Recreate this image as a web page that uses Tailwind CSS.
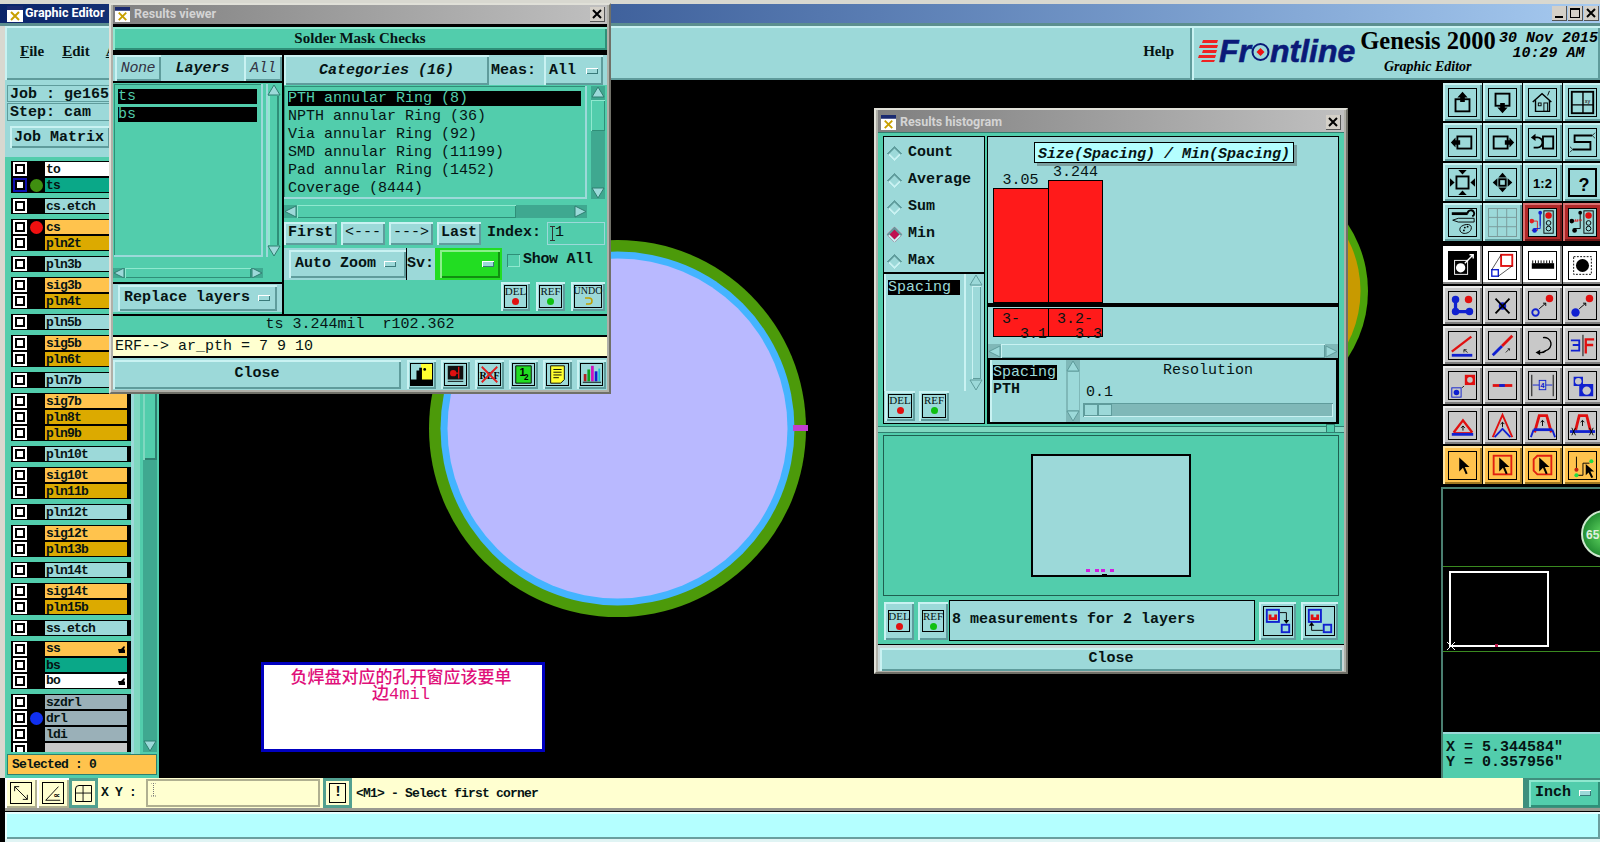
<!DOCTYPE html>
<html>
<head>
<meta charset="utf-8">
<script src="https://cdn.jsdelivr.net/npm/@tailwindcss/browser@4"></script>
</head>
<body class="bg-black">
<div class="relative w-[1600px] h-[842px] overflow-hidden bg-black flex flex-col font-['Liberation_Mono','Noto_Sans_CJK_SC',monospace] font-bold text-[#061414] text-[15px]">

<!-- main title bar -->
<div class="h-[4px] bg-[#d8d8d0] shrink-0"></div>
<div class="h-[19px] shrink-0 flex items-center bg-gradient-to-r from-[#0a246a] to-[#a6caf0] pl-[7px] pr-[1px]">
  <svg width="16" height="16" viewBox="0 0 16 16"><rect width="16" height="16" fill="#fff"/><rect width="16" height="4" fill="#1a2a70"/><path d="M4 6 L12 14 M12 6 L4 14" stroke="#c8a000" stroke-width="2"/></svg>
  <span class="ml-[2px] font-['Roboto',sans-serif] text-white text-[12.5px]">Graphic Editor</span>
  <div class="ml-auto flex gap-[1px]">
    <div class="w-[15px] h-[15px] bg-[#d4d0c8] border-r border-b border-[#555] flex items-end justify-center pb-[2px]"><div class="w-[8px] h-[2px] bg-black"></div></div>
    <div class="w-[15px] h-[15px] bg-[#d4d0c8] border-r border-b border-[#555] flex items-center justify-center"><div class="w-[10px] h-[10px] border border-black border-t-2"></div></div>
    <div class="w-[15px] h-[15px] bg-[#d4d0c8] border-r border-b border-[#555] flex items-center justify-center"><svg width="10" height="10" viewBox="0 0 10 10"><path d="M1 1L9 9M9 1L1 9" stroke="#000" stroke-width="2"/></svg></div>
  </div>
</div>
<div class="h-[3px] bg-[#5c8f8f] shrink-0"></div>

<!-- menu bar -->
<div class="h-[54px] shrink-0 flex bg-[#d8d8d0]">
  <div class="w-[5px]"></div>
  <div class="w-[1187px] h-full flex items-center pb-[4px] bg-[#9cd9d9] shadow-[inset_2px_2px_0_#c9f2f2,inset_-2px_-2px_0_#5f9c9c] font-['Liberation_Serif',serif] text-[15px]">
    <span class="ml-[15px]"><span class="underline">F</span>ile</span>
    <span class="ml-[18px]"><span class="underline">E</span>dit</span>
    <span class="ml-[16px]"><span class="underline">A</span>ction</span>
    <span class="ml-auto mr-[18px]">Help</span>
  </div>
  <div class="flex-1 relative flex items-center pb-[4px] bg-[#9cd9d9] shadow-[inset_2px_2px_0_#c9f2f2,inset_-2px_-2px_0_#5f9c9c]">
    <svg class="ml-[5px] shrink-0" width="22" height="24" viewBox="0 0 22 24"><path d="M6 1H21L20 4H5ZM3 6H21L20 9H2ZM6 11H20L19 14H5ZM2 16H19L18 19H1ZM5 21H18L17 23H4Z" fill="#ee2222"/></svg>
    <div class="flex items-center font-['Liberation_Sans',sans-serif] italic text-[32px] leading-[32px] text-[#0a1a78] [-webkit-text-stroke:0.6px_#0a1a78]">Fr<svg width="19" height="22" viewBox="0 0 19 22"><circle cx="9.5" cy="12" r="8" fill="none" stroke="#0a1a78" stroke-width="2"/><path d="M9.5 8L13.5 12L9.5 16L5.5 12Z" fill="#ee1111"/></svg>ntline</div>
    <div class="absolute left-[161px] top-[0px] w-[150px] text-center font-['Liberation_Serif',serif] text-[24.5px] leading-[30px] text-black">Genesis 2000</div>
    <div class="absolute left-[192px] top-[33px] font-['Liberation_Serif',serif] italic text-[14px] leading-[16px] text-black">Graphic Editor</div>
    <div class="absolute left-[305px] top-[5px] w-[103px] text-center italic text-[15px] leading-[15px] text-black whitespace-pre">30 Nov 2015<br>10:29 AM</div>
  </div>
</div>

<!-- middle -->
<div class="flex-1 min-h-0 flex">
  <!-- left panel -->
  <div class="w-[159px] shrink-0 flex bg-[#d8d8d0] pl-[5px]">
    <div class="flex-1 flex flex-col bg-[#3f9a88]">
      <div class="h-[77px] shrink-0 bg-[#9cd9d9] px-[2px] pt-[5px] flex flex-col text-[15px] leading-[17px]">
        <div class="h-[17px] border border-[#5f9c9c] pl-[2px] whitespace-nowrap overflow-hidden">Job : ge165</div>
        <div class="h-[18px] mt-[1px] border border-[#5f9c9c] pl-[2px]">Step: cam</div>
        <div class="mt-[5px] w-[100px] ml-[3px] h-[22px] flex items-center pl-[4px] bg-[#9cd9d9] shadow-[inset_2px_2px_0_#c9f2f2,inset_-2px_-2px_0_#5f9c9c]">Job Matrix</div>
      </div>
      <div class="flex-1 min-h-0 flex bg-[#52cdac]">
        <div class="w-[126px] h-[591px] mt-[4px] overflow-hidden pl-[6px] text-[13px] leading-[16px] tracking-[-0.8px] flex flex-col gap-[5px] bg-[#52cdac] shrink-0">
          <div class="bg-black">
            <div class="h-[16px] flex items-center"><div class="w-[14px] h-[14px] ml-[2px] border-2 border-white"><div class="w-full h-full border-2 border-black bg-white"></div></div><div class="w-[18px] flex justify-center"></div><div class="w-[82px] h-[14px] bg-white pl-[1px]">to</div></div>
            <div class="h-[16px] flex items-center"><div class="w-[14px] h-[14px] ml-[2px] border-2 border-[#1010b0]"><div class="w-full h-full border-2 border-black bg-white"></div></div><div class="w-[18px] flex justify-center"><div class="w-[13px] h-[13px] rounded-full bg-[#3f8f10]"></div></div><div class="w-[82px] h-[14px] bg-[#0aa888] pl-[1px]">ts</div></div>
          </div>
          <div class="bg-black"><div class="h-[16px] flex items-center"><div class="w-[14px] h-[14px] ml-[2px] border-2 border-white"><div class="w-full h-full border-2 border-black bg-white"></div></div><div class="w-[18px]"></div><div class="w-[82px] h-[14px] bg-[#9cd9d9] pl-[1px]">cs.etch</div></div></div>
          <div class="bg-black">
            <div class="h-[16px] flex items-center"><div class="w-[14px] h-[14px] ml-[2px] border-2 border-white"><div class="w-full h-full border-2 border-black bg-white"></div></div><div class="w-[18px] flex justify-center"><div class="w-[13px] h-[13px] rounded-full bg-[#f01010]"></div></div><div class="w-[82px] h-[14px] bg-[#ffc34d] pl-[1px]">cs</div></div>
            <div class="h-[16px] flex items-center"><div class="w-[14px] h-[14px] ml-[2px] border-2 border-white"><div class="w-full h-full border-2 border-black bg-white"></div></div><div class="w-[18px]"></div><div class="w-[82px] h-[14px] bg-[#dcaa00] pl-[1px]">pln2t</div></div>
          </div>
          <div class="bg-black"><div class="h-[16px] flex items-center"><div class="w-[14px] h-[14px] ml-[2px] border-2 border-white"><div class="w-full h-full border-2 border-black bg-white"></div></div><div class="w-[18px]"></div><div class="w-[82px] h-[14px] bg-[#9cd9d9] pl-[1px]">pln3b</div></div></div>
          <div class="bg-black">
            <div class="h-[16px] flex items-center"><div class="w-[14px] h-[14px] ml-[2px] border-2 border-white"><div class="w-full h-full border-2 border-black bg-white"></div></div><div class="w-[18px]"></div><div class="w-[82px] h-[14px] bg-[#ffc34d] pl-[1px]">sig3b</div></div>
            <div class="h-[16px] flex items-center"><div class="w-[14px] h-[14px] ml-[2px] border-2 border-white"><div class="w-full h-full border-2 border-black bg-white"></div></div><div class="w-[18px]"></div><div class="w-[82px] h-[14px] bg-[#dcaa00] pl-[1px]">pln4t</div></div>
          </div>
          <div class="bg-black"><div class="h-[16px] flex items-center"><div class="w-[14px] h-[14px] ml-[2px] border-2 border-white"><div class="w-full h-full border-2 border-black bg-white"></div></div><div class="w-[18px]"></div><div class="w-[82px] h-[14px] bg-[#9cd9d9] pl-[1px]">pln5b</div></div></div>
          <div class="bg-black">
            <div class="h-[16px] flex items-center"><div class="w-[14px] h-[14px] ml-[2px] border-2 border-white"><div class="w-full h-full border-2 border-black bg-white"></div></div><div class="w-[18px]"></div><div class="w-[82px] h-[14px] bg-[#ffc34d] pl-[1px]">sig5b</div></div>
            <div class="h-[16px] flex items-center"><div class="w-[14px] h-[14px] ml-[2px] border-2 border-white"><div class="w-full h-full border-2 border-black bg-white"></div></div><div class="w-[18px]"></div><div class="w-[82px] h-[14px] bg-[#dcaa00] pl-[1px]">pln6t</div></div>
          </div>
          <div class="bg-black"><div class="h-[16px] flex items-center"><div class="w-[14px] h-[14px] ml-[2px] border-2 border-white"><div class="w-full h-full border-2 border-black bg-white"></div></div><div class="w-[18px]"></div><div class="w-[82px] h-[14px] bg-[#9cd9d9] pl-[1px]">pln7b</div></div></div>
          <div class="bg-black">
            <div class="h-[16px] flex items-center"><div class="w-[14px] h-[14px] ml-[2px] border-2 border-white"><div class="w-full h-full border-2 border-black bg-white"></div></div><div class="w-[18px]"></div><div class="w-[82px] h-[14px] bg-[#ffc34d] pl-[1px]">sig7b</div></div>
            <div class="h-[16px] flex items-center"><div class="w-[14px] h-[14px] ml-[2px] border-2 border-white"><div class="w-full h-full border-2 border-black bg-white"></div></div><div class="w-[18px]"></div><div class="w-[82px] h-[14px] bg-[#dcaa00] pl-[1px]">pln8t</div></div>
            <div class="h-[16px] flex items-center"><div class="w-[14px] h-[14px] ml-[2px] border-2 border-white"><div class="w-full h-full border-2 border-black bg-white"></div></div><div class="w-[18px]"></div><div class="w-[82px] h-[14px] bg-[#dcaa00] pl-[1px]">pln9b</div></div>
          </div>
          <div class="bg-black"><div class="h-[16px] flex items-center"><div class="w-[14px] h-[14px] ml-[2px] border-2 border-white"><div class="w-full h-full border-2 border-black bg-white"></div></div><div class="w-[18px]"></div><div class="w-[82px] h-[14px] bg-[#9cd9d9] pl-[1px]">pln10t</div></div></div>
          <div class="bg-black">
            <div class="h-[16px] flex items-center"><div class="w-[14px] h-[14px] ml-[2px] border-2 border-white"><div class="w-full h-full border-2 border-black bg-white"></div></div><div class="w-[18px]"></div><div class="w-[82px] h-[14px] bg-[#ffc34d] pl-[1px]">sig10t</div></div>
            <div class="h-[16px] flex items-center"><div class="w-[14px] h-[14px] ml-[2px] border-2 border-white"><div class="w-full h-full border-2 border-black bg-white"></div></div><div class="w-[18px]"></div><div class="w-[82px] h-[14px] bg-[#dcaa00] pl-[1px]">pln11b</div></div>
          </div>
          <div class="bg-black"><div class="h-[16px] flex items-center"><div class="w-[14px] h-[14px] ml-[2px] border-2 border-white"><div class="w-full h-full border-2 border-black bg-white"></div></div><div class="w-[18px]"></div><div class="w-[82px] h-[14px] bg-[#9cd9d9] pl-[1px]">pln12t</div></div></div>
          <div class="bg-black">
            <div class="h-[16px] flex items-center"><div class="w-[14px] h-[14px] ml-[2px] border-2 border-white"><div class="w-full h-full border-2 border-black bg-white"></div></div><div class="w-[18px]"></div><div class="w-[82px] h-[14px] bg-[#ffc34d] pl-[1px]">sig12t</div></div>
            <div class="h-[16px] flex items-center"><div class="w-[14px] h-[14px] ml-[2px] border-2 border-white"><div class="w-full h-full border-2 border-black bg-white"></div></div><div class="w-[18px]"></div><div class="w-[82px] h-[14px] bg-[#dcaa00] pl-[1px]">pln13b</div></div>
          </div>
          <div class="bg-black"><div class="h-[16px] flex items-center"><div class="w-[14px] h-[14px] ml-[2px] border-2 border-white"><div class="w-full h-full border-2 border-black bg-white"></div></div><div class="w-[18px]"></div><div class="w-[82px] h-[14px] bg-[#9cd9d9] pl-[1px]">pln14t</div></div></div>
          <div class="bg-black">
            <div class="h-[16px] flex items-center"><div class="w-[14px] h-[14px] ml-[2px] border-2 border-white"><div class="w-full h-full border-2 border-black bg-white"></div></div><div class="w-[18px]"></div><div class="w-[82px] h-[14px] bg-[#ffc34d] pl-[1px]">sig14t</div></div>
            <div class="h-[16px] flex items-center"><div class="w-[14px] h-[14px] ml-[2px] border-2 border-white"><div class="w-full h-full border-2 border-black bg-white"></div></div><div class="w-[18px]"></div><div class="w-[82px] h-[14px] bg-[#dcaa00] pl-[1px]">pln15b</div></div>
          </div>
          <div class="bg-black"><div class="h-[16px] flex items-center"><div class="w-[14px] h-[14px] ml-[2px] border-2 border-white"><div class="w-full h-full border-2 border-black bg-white"></div></div><div class="w-[18px]"></div><div class="w-[82px] h-[14px] bg-[#9cd9d9] pl-[1px]">ss.etch</div></div></div>
          <div class="bg-black">
            <div class="h-[16px] flex items-center"><div class="w-[14px] h-[14px] ml-[2px] border-2 border-white"><div class="w-full h-full border-2 border-black bg-white"></div></div><div class="w-[18px]"></div><div class="w-[82px] h-[14px] bg-[#ffc34d] pl-[1px] flex justify-between items-center">ss<svg class="mr-[1px]" width="9" height="9" viewBox="0 0 9 9"><path d="M1 4L4 4L7 1L8 2L7 4L8 5V8H2Z"/></svg></div></div>
            <div class="h-[16px] flex items-center"><div class="w-[14px] h-[14px] ml-[2px] border-2 border-white"><div class="w-full h-full border-2 border-black bg-white"></div></div><div class="w-[18px]"></div><div class="w-[82px] h-[14px] bg-[#0aa888] pl-[1px]">bs</div></div>
            <div class="h-[16px] flex items-center"><div class="w-[14px] h-[14px] ml-[2px] border-2 border-white"><div class="w-full h-full border-2 border-black bg-white"></div></div><div class="w-[18px]"></div><div class="w-[82px] h-[14px] bg-white pl-[1px] flex justify-between items-center">bo<svg class="mr-[1px]" width="9" height="9" viewBox="0 0 9 9"><path d="M1 4L4 4L7 1L8 2L7 4L8 5V8H2Z"/></svg></div></div>
          </div>
          <div class="bg-black">
            <div class="h-[16px] flex items-center"><div class="w-[14px] h-[14px] ml-[2px] border-2 border-white"><div class="w-full h-full border-2 border-black bg-white"></div></div><div class="w-[18px]"></div><div class="w-[82px] h-[14px] bg-[#9ab0b8] pl-[1px]">szdrl</div></div>
            <div class="h-[16px] flex items-center"><div class="w-[14px] h-[14px] ml-[2px] border-2 border-white"><div class="w-full h-full border-2 border-black bg-white"></div></div><div class="w-[18px] flex justify-center"><div class="w-[13px] h-[13px] rounded-full bg-[#1030f0]"></div></div><div class="w-[82px] h-[14px] bg-[#9ab0b8] pl-[1px]">drl</div></div>
            <div class="h-[16px] flex items-center"><div class="w-[14px] h-[14px] ml-[2px] border-2 border-white"><div class="w-full h-full border-2 border-black bg-white"></div></div><div class="w-[18px]"></div><div class="w-[82px] h-[14px] bg-[#9ab0b8] pl-[1px]">ldi</div></div>
            <div class="h-[16px] flex items-center"><div class="w-[14px] h-[14px] ml-[2px] border-2 border-white"><div class="w-full h-full border-2 border-black bg-white"></div></div><div class="w-[18px]"></div><div class="w-[82px] h-[14px] bg-[#c8c8c8] pl-[1px]"></div></div>
          </div>
        </div>
        <!-- list scroll bar -->
        <div class="w-[3px] bg-[#9cd9d9]"></div>
        <div class="w-[6px] bg-[#7fd8c0]"></div>
        <div class="w-[14px] ml-[3px] mr-[1px] h-[591px] mt-[4px] bg-[#3fa890] flex flex-col justify-between">
          <div class="h-[299px] shadow-[inset_2px_0_0_#7fd8c0,inset_-2px_-2px_0_#2f7f70] bg-[#52cdac]"></div>
          <svg width="14" height="12" viewBox="0 0 14 12"><polygon points="1,1 13,1 7,11" fill="#9cd9d9" stroke="#2f7f70"/></svg>
        </div>
      </div>
      <div class="h-[24px] shrink-0 bg-[#52cdac] pl-[2px] pr-[2px] pb-[3px]">
        <div class="h-[21px] bg-[#ffc34d] border border-[#2f7f70] pl-[4px] text-[13px] leading-[19px] tracking-[-0.8px]">Selected : 0</div>
      </div>
    </div>
  </div>

  <!-- canvas -->
  <div class="flex-1 relative bg-black overflow-hidden">
    <svg class="absolute left-[-159px] top-[-80px]" width="1600" height="842" viewBox="0 0 1600 842">
      <circle cx="617.5" cy="428.5" r="188.5" fill="#4c9a0a"/>
      <circle cx="617.5" cy="428.5" r="177" fill="#44b4ff"/>
      <circle cx="617.5" cy="428.5" r="170" fill="#b9b9ff"/>
      <rect x="793" y="425" width="15" height="6" fill="#c040d0"/>
      <circle cx="1247.5" cy="291" r="120.5" fill="#4ca30a"/>
      <circle cx="1247.5" cy="291" r="113" fill="#c89a00"/>
    </svg>
    <div class="absolute left-[102px] top-[582px] w-[284px] h-[90px] bg-white border-[3px] border-[#0000c0] pt-[6px] text-center text-[#e0107a] text-[17px] leading-[16px] font-['Liberation_Mono','Noto_Sans_CJK_SC',monospace] font-medium">
      <div class="w-[230px] mx-auto ml-[22px]">负焊盘对应的孔开窗应该要单边4mil</div>
    </div>
  </div>

  <!-- right panel -->
  <div class="w-[159px] shrink-0 bg-black flex flex-col pl-[2px] pt-[3px] overflow-hidden">
    <div class="grid grid-cols-[repeat(4,39px)] gap-x-[1px] gap-y-[2px]">
      <div class="h-[38px] flex items-center justify-center bg-[#9cd9d9] shadow-[inset_2px_2px_0_#c9f2f2,inset_-2px_-2px_0_#5f9c9c]"><svg class="border border-black" width="29" height="29" viewBox="0 0 29 29"><rect x="7" y="11" width="15" height="13" fill="none" stroke="#000" stroke-width="2"/><polygon points="14.5,3 20,9 17,9 17,14 12,14 12,9 9,9"/></svg></div>
      <div class="h-[38px] flex items-center justify-center bg-[#9cd9d9] shadow-[inset_2px_2px_0_#c9f2f2,inset_-2px_-2px_0_#5f9c9c]"><svg class="border border-black" width="29" height="29" viewBox="0 0 29 29"><rect x="7" y="5" width="15" height="13" fill="none" stroke="#000" stroke-width="2"/><polygon points="14.5,26 20,20 17,20 17,15 12,15 12,20 9,20"/></svg></div>
      <div class="h-[38px] flex items-center justify-center bg-[#9cd9d9] shadow-[inset_2px_2px_0_#c9f2f2,inset_-2px_-2px_0_#5f9c9c]"><svg class="border border-black" width="29" height="29" viewBox="0 0 29 29"><path d="M4 14L14 5L24 14M7 12V24H22V12" fill="none" stroke="#000" stroke-width="1.5"/><rect x="10" y="15" width="3" height="3" fill="none" stroke="#000"/><rect x="16" y="15" width="4" height="9" fill="none" stroke="#000"/><path d="M20 7L22 2" stroke="#000"/></svg></div>
      <div class="h-[38px] flex items-center justify-center bg-[#9cd9d9] shadow-[inset_2px_2px_0_#c9f2f2,inset_-2px_-2px_0_#5f9c9c]"><svg class="border border-black" width="29" height="29" viewBox="0 0 29 29"><rect x="3" y="3" width="23" height="23" fill="none" stroke="#000" stroke-width="2"/><path d="M15 3V26M3 17H26" stroke="#000" stroke-width="1.5"/><text x="17" y="15" font-size="5" fill="#333">xy</text></svg></div>

      <div class="h-[38px] flex items-center justify-center bg-[#9cd9d9] shadow-[inset_2px_2px_0_#c9f2f2,inset_-2px_-2px_0_#5f9c9c]"><svg class="border border-black" width="29" height="29" viewBox="0 0 29 29"><rect x="9" y="8" width="15" height="13" fill="none" stroke="#000" stroke-width="2"/><polygon points="2,14.5 7,9 7,12 12,12 12,17 7,17 7,20"/></svg></div>
      <div class="h-[38px] flex items-center justify-center bg-[#9cd9d9] shadow-[inset_2px_2px_0_#c9f2f2,inset_-2px_-2px_0_#5f9c9c]"><svg class="border border-black" width="29" height="29" viewBox="0 0 29 29"><rect x="5" y="8" width="15" height="13" fill="none" stroke="#000" stroke-width="2"/><polygon points="27,14.5 22,9 22,12 17,12 17,17 22,17 22,20"/></svg></div>
      <div class="h-[38px] flex items-center justify-center bg-[#9cd9d9] shadow-[inset_2px_2px_0_#c9f2f2,inset_-2px_-2px_0_#5f9c9c]"><svg class="border border-black" width="29" height="29" viewBox="0 0 29 29"><rect x="15" y="8" width="11" height="13" fill="none" stroke="#000" stroke-width="2"/><path d="M6 9H9A5 5 0 0 1 9 20H5" fill="none" stroke="#000" stroke-width="2"/><polygon points="2,9 7,5 7,13"/></svg></div>
      <div class="h-[38px] flex items-center justify-center bg-[#9cd9d9] shadow-[inset_2px_2px_0_#c9f2f2,inset_-2px_-2px_0_#5f9c9c]"><svg class="border border-black" width="29" height="29" viewBox="0 0 29 29"><path d="M25 7H6V14H23V22H4" fill="none" stroke="#000" stroke-width="2"/><path d="M28 4L25 7L28 10M1 19L4 22L1 25" fill="none" stroke="#000" stroke-width="0.8"/></svg></div>

      <div class="h-[38px] flex items-center justify-center bg-[#9cd9d9] shadow-[inset_2px_2px_0_#c9f2f2,inset_-2px_-2px_0_#5f9c9c]"><svg class="border border-black" width="29" height="29" viewBox="0 0 29 29"><rect x="8" y="8" width="13" height="13" fill="none" stroke="#000" stroke-width="2"/><polygon points="14.5,6 10,1 19,1"/><polygon points="14.5,23 10,28 19,28"/><polygon points="6,14.5 1,10 1,19"/><polygon points="23,14.5 28,10 28,19"/></svg></div>
      <div class="h-[38px] flex items-center justify-center bg-[#9cd9d9] shadow-[inset_2px_2px_0_#c9f2f2,inset_-2px_-2px_0_#5f9c9c]"><svg class="border border-black" width="29" height="29" viewBox="0 0 29 29"><rect x="11" y="11" width="7" height="7" fill="none" stroke="#000" stroke-width="2"/><polygon points="14.5,4 10,9 19,9"/><polygon points="14.5,25 10,20 19,20"/><polygon points="4,14.5 9,10 9,19"/><polygon points="25,14.5 20,10 20,19"/></svg></div>
      <div class="h-[38px] flex items-center justify-center bg-[#9cd9d9] shadow-[inset_2px_2px_0_#c9f2f2,inset_-2px_-2px_0_#5f9c9c]"><svg class="border border-black" width="29" height="29" viewBox="0 0 29 29"><text x="14.5" y="20" text-anchor="middle" font-size="14" font-family="Liberation Sans" font-weight="bold">1:2</text></svg></div>
      <div class="h-[38px] flex items-center justify-center bg-[#9cd9d9] shadow-[inset_2px_2px_0_#c9f2f2,inset_-2px_-2px_0_#5f9c9c]"><svg class="border-2 border-black" width="29" height="29" viewBox="0 0 25 25"><text x="14" y="21" text-anchor="middle" font-size="18" font-family="Liberation Sans" font-weight="bold">?</text></svg></div>

      <div class="h-[38px] flex items-center justify-center bg-[#9cd9d9] shadow-[inset_2px_2px_0_#c9f2f2,inset_-2px_-2px_0_#5f9c9c]"><svg class="border border-black" width="29" height="29" viewBox="0 0 29 29"><path d="M3 5H20" stroke="#000" stroke-width="3"/><path d="M20 5A3.5 3.5 0 1 1 25 8" fill="none" stroke="#000" stroke-width="2"/><path d="M4 12L10 10H27V14H10Z" fill="none" stroke="#000"/><path d="M12 20C15 16 24 15 24 20C24 25 18 27 15 26C12 25 11 23 12 20Z" fill="none" stroke="#000"/><circle cx="17" cy="20" r="1"/><circle cx="20" cy="19" r="1"/><circle cx="16" cy="23" r="1"/></svg></div>
      <div class="h-[38px] flex items-center justify-center bg-[#9cd9d9] shadow-[inset_2px_2px_0_#c9f2f2,inset_-2px_-2px_0_#5f9c9c]"><svg class="border border-[#7a9a9a]" width="29" height="29" viewBox="0 0 29 29"><path d="M9 0V29M19 0V29M0 9H29M0 19H29" stroke="#7a9a9a"/></svg></div>
      <div class="h-[38px] flex items-center justify-center bg-[#b02828] shadow-[inset_2px_2px_0_#d87070,inset_-2px_-2px_0_#701818]"><svg class="border border-black bg-[#9cd9d9]" width="29" height="29" viewBox="0 0 29 29"><path d="M12 4V18" stroke="#1020d0" stroke-width="1"/><path d="M3 13H9V23H3" fill="none" stroke="#e02020"/><path d="M12 4V21H6" fill="none" stroke="#1020d0"/><circle cx="12" cy="4" r="2" fill="#1020d0"/><circle cx="3" cy="13" r="2.5" fill="#e02020"/><circle cx="6" cy="23" r="2.5" fill="#1020d0"/><rect x="16" y="2" width="10" height="24" fill="none" stroke="#000"/><circle cx="21" cy="7" r="3.5" fill="#e01010"/><circle cx="21" cy="15" r="2.5" fill="none" stroke="#000"/><circle cx="21" cy="21" r="2.5" fill="none" stroke="#000"/></svg></div>
      <div class="h-[38px] flex items-center justify-center bg-[#b02828] shadow-[inset_2px_2px_0_#d87070,inset_-2px_-2px_0_#701818]"><svg class="border border-black bg-[#9cd9d9]" width="29" height="29" viewBox="0 0 29 29"><path d="M12 4V21H6" fill="none" stroke="#000"/><path d="M3 13H10" stroke="#e02020"/><circle cx="12" cy="4" r="2"/><circle cx="3" cy="13" r="2.5"/><circle cx="6" cy="23" r="2.5"/><path d="M7 11V13M9 11V13M11 11V13M13 11V13" stroke="#e02020"/><rect x="16" y="2" width="10" height="24" fill="none" stroke="#000"/><circle cx="21" cy="7" r="3.5" fill="#e01010"/><circle cx="21" cy="15" r="2.5" fill="none" stroke="#000"/><circle cx="21" cy="21" r="2.5" fill="none" stroke="#000"/></svg></div>
    </div>

    <div class="grid grid-cols-[repeat(4,39px)] gap-x-[1px] gap-y-[2px] mt-[5px]">
      <div class="h-[38px] flex items-center justify-center bg-white shadow-[inset_-2px_-2px_0_#888]"><svg class="border border-black bg-white" width="29" height="29" viewBox="0 0 29 29"><rect width="29" height="29" fill="#000"/><rect x="6" y="9" width="14" height="15" fill="none" stroke="#fff"/><circle cx="12.5" cy="17" r="5" fill="#fff"/><path d="M17 12L26 3M22 3H26V7" fill="none" stroke="#fff" stroke-width="1.5"/></svg></div>
      <div class="h-[38px] flex items-center justify-center bg-white shadow-[inset_-2px_-2px_0_#888]"><svg class="border border-black bg-white" width="29" height="29" viewBox="0 0 29 29"><rect x="13" y="3" width="12" height="12" fill="none" stroke="#e01010" stroke-width="2"/><rect x="3" y="19" width="7" height="7" fill="none" stroke="#1020d0" stroke-width="1.5"/><path d="M3 19L13 3M10 26L25 15" stroke="#000" stroke-width="0.7"/></svg></div>
      <div class="h-[38px] flex items-center justify-center bg-white shadow-[inset_-2px_-2px_0_#888]"><svg class="border border-black bg-white" width="29" height="29" viewBox="0 0 29 29"><rect x="3" y="12" width="24" height="6"/><path d="M4 9V12M7 9V12M10 9V12M13 9V12M16 9V12M19 9V12M22 9V12M25 9V12" stroke="#000"/></svg></div>
      <div class="h-[38px] flex items-center justify-center bg-white shadow-[inset_-2px_-2px_0_#888]"><svg class="border border-black bg-white" width="29" height="29" viewBox="0 0 29 29"><rect x="5" y="5" width="19" height="19" fill="none" stroke="#000" stroke-dasharray="2 1.5"/><circle cx="14.5" cy="14.5" r="7"/></svg></div>

      <div class="h-[38px] flex items-center justify-center bg-[#c8c8c8] shadow-[inset_2px_2px_0_#ececec,inset_-2px_-2px_0_#808080]"><svg class="border border-black" width="29" height="29" viewBox="0 0 29 29"><path d="M7 8V21H22" fill="none" stroke="#1020d0" stroke-width="3.5"/><circle cx="7" cy="8" r="4" fill="#1020d0"/><circle cx="7" cy="21" r="4" fill="#1020d0"/><circle cx="22" cy="21" r="4" fill="#1020d0"/><circle cx="21" cy="8" r="4" fill="#e01010"/></svg></div>
      <div class="h-[38px] flex items-center justify-center bg-[#c8c8c8] shadow-[inset_2px_2px_0_#ececec,inset_-2px_-2px_0_#808080]"><svg class="border border-black" width="29" height="29" viewBox="0 0 29 29"><circle cx="14.5" cy="15" r="4" fill="#1020d0"/><path d="M7 7L22 23M22 7L7 23" stroke="#000" stroke-width="2"/></svg></div>
      <div class="h-[38px] flex items-center justify-center bg-[#c8c8c8] shadow-[inset_2px_2px_0_#ececec,inset_-2px_-2px_0_#808080]"><svg class="border border-black" width="29" height="29" viewBox="0 0 29 29"><circle cx="7" cy="22" r="3.5" fill="none" stroke="#1020d0" stroke-width="2"/><circle cx="22" cy="7" r="4" fill="#e01010"/><path d="M11 18L18 12M15 12H18V15" fill="none" stroke="#000"/></svg></div>
      <div class="h-[38px] flex items-center justify-center bg-[#c8c8c8] shadow-[inset_2px_2px_0_#ececec,inset_-2px_-2px_0_#808080]"><svg class="border border-black" width="29" height="29" viewBox="0 0 29 29"><circle cx="7" cy="22" r="4.5" fill="#1020d0"/><circle cx="22" cy="7" r="4" fill="#e01010"/><path d="M11 18L18 12M15 12H18V15" fill="none" stroke="#000"/></svg></div>

      <div class="h-[38px] flex items-center justify-center bg-[#c8c8c8] shadow-[inset_2px_2px_0_#ececec,inset_-2px_-2px_0_#808080]"><svg class="border border-black" width="29" height="29" viewBox="0 0 29 29"><path d="M3 21L24 5" stroke="#e01010" stroke-width="2.5"/><path d="M3 25H25" stroke="#1020d0" stroke-width="3"/><path d="M16 19L20 22M16 19H19M16 19V22" stroke="#000" fill="none" stroke-width="0.8"/></svg></div>
      <div class="h-[38px] flex items-center justify-center bg-[#c8c8c8] shadow-[inset_2px_2px_0_#ececec,inset_-2px_-2px_0_#808080]"><svg class="border border-black" width="29" height="29" viewBox="0 0 29 29"><path d="M4 25L14 15" stroke="#1020d0" stroke-width="3"/><path d="M14 15L25 4" stroke="#e01010" stroke-width="3"/><path d="M18 22L22 18M20 18H22V20" stroke="#000" fill="none" stroke-width="0.8"/></svg></div>
      <div class="h-[38px] flex items-center justify-center bg-[#c8c8c8] shadow-[inset_2px_2px_0_#ececec,inset_-2px_-2px_0_#808080]"><svg class="border border-black" width="29" height="29" viewBox="0 0 29 29"><path d="M15 6A7 7 0 0 1 18 20A8 8 0 0 1 11 22" fill="none" stroke="#000" stroke-width="1.5"/><polygon points="7,22 12,19 12,25"/></svg></div>
      <div class="h-[38px] flex items-center justify-center bg-[#c8c8c8] shadow-[inset_2px_2px_0_#ececec,inset_-2px_-2px_0_#808080]"><svg class="border border-black" width="29" height="29" viewBox="0 0 29 29"><path d="M15 3V26" stroke="#000"/><path d="M2 9H11V20H2M4 14H11" fill="none" stroke="#1020d0" stroke-width="2"/><path d="M27 8H18V23M18 14H26" fill="none" stroke="#e01010" stroke-width="2.5"/></svg></div>

      <div class="h-[38px] flex items-center justify-center bg-[#c8c8c8] shadow-[inset_2px_2px_0_#ececec,inset_-2px_-2px_0_#808080]"><svg class="border border-black" width="29" height="29" viewBox="0 0 29 29"><rect x="3" y="17" width="10" height="10" fill="none" stroke="#1020d0"/><circle cx="8" cy="22" r="3" fill="#1020d0"/><rect x="17" y="3" width="11" height="11" fill="#e01010"/><circle cx="22.5" cy="8.5" r="3" fill="#c8c8c8"/><path d="M14 17L16 15" stroke="#000"/></svg></div>
      <div class="h-[38px] flex items-center justify-center bg-[#c8c8c8] shadow-[inset_2px_2px_0_#ececec,inset_-2px_-2px_0_#808080]"><svg class="border border-black" width="29" height="29" viewBox="0 0 29 29"><path d="M4 14.5H25" stroke="#e01010" stroke-width="3"/><rect x="11" y="13" width="6" height="3" fill="#1020d0"/></svg></div>
      <div class="h-[38px] flex items-center justify-center bg-[#c8c8c8] shadow-[inset_2px_2px_0_#ececec,inset_-2px_-2px_0_#808080]"><svg class="border border-black" width="29" height="29" viewBox="0 0 29 29"><path d="M3 3V26M26 3V26" stroke="#000"/><rect x="11" y="9" width="7" height="10" fill="none" stroke="#1020d0"/><path d="M4 14H11M18 14H25" stroke="#1020d0"/><text x="14.5" y="17" text-anchor="middle" font-size="8" fill="#1020d0">4</text></svg></div>
      <div class="h-[38px] flex items-center justify-center bg-[#c8c8c8] shadow-[inset_2px_2px_0_#ececec,inset_-2px_-2px_0_#808080]"><svg class="border border-black" width="29" height="29" viewBox="0 0 29 29"><path d="M5 5H15V13H26V26H11V15H5Z" fill="#1020d0"/><circle cx="10" cy="10" r="3.5" fill="#c8c8c8"/><circle cx="19" cy="20" r="4.5" fill="#c8c8c8"/></svg></div>

      <div class="h-[38px] flex items-center justify-center bg-[#c8c8c8] shadow-[inset_2px_2px_0_#ececec,inset_-2px_-2px_0_#808080]"><svg class="border border-black" width="29" height="29" viewBox="0 0 29 29"><path d="M5 22L15 9L25 22" fill="none" stroke="#e01010" stroke-width="2.5"/><path d="M5 22H25" stroke="#e01010"/><path d="M3 24H26" stroke="#1020d0" stroke-width="3"/><path d="M15 15V20M13 17L15 15L17 17" stroke="#000" fill="none"/></svg></div>
      <div class="h-[38px] flex items-center justify-center bg-[#c8c8c8] shadow-[inset_2px_2px_0_#ececec,inset_-2px_-2px_0_#808080]"><svg class="border border-black" width="29" height="29" viewBox="0 0 29 29"><path d="M4 27L14.5 3L25 27" fill="none" stroke="#e01010" stroke-width="2"/><path d="M6 27L14.5 18L23 27" fill="none" stroke="#1020d0" stroke-width="2"/><path d="M14.5 11V16M12.5 13L14.5 11L16.5 13" stroke="#000" fill="none"/></svg></div>
      <div class="h-[38px] flex items-center justify-center bg-[#c8c8c8] shadow-[inset_2px_2px_0_#ececec,inset_-2px_-2px_0_#808080]"><svg class="border border-black" width="29" height="29" viewBox="0 0 29 29"><path d="M6 22L11 4H19L24 22" fill="none" stroke="#e01010" stroke-width="3"/><path d="M5 19H25" stroke="#1020d0" stroke-width="3"/><path d="M5 19L2 27M25 19L28 27" stroke="#1020d0" stroke-width="2"/><path d="M14.5 9V15M12.5 11L14.5 9L16.5 11" stroke="#000" fill="none"/></svg></div>
      <div class="h-[38px] flex items-center justify-center bg-[#c8c8c8] shadow-[inset_2px_2px_0_#ececec,inset_-2px_-2px_0_#808080]"><svg class="border border-black" width="29" height="29" viewBox="0 0 29 29"><path d="M7 20L11 4H19L23 20" fill="none" stroke="#e01010" stroke-width="3"/><path d="M1 21H28" stroke="#1020d0" stroke-width="3"/><path d="M3 17L7 25M7 17L3 25M22 17L26 25M26 17L22 25" stroke="#000"/><path d="M14.5 9V15M12.5 11L14.5 9L16.5 11" stroke="#000" fill="none"/></svg></div>

      <div class="h-[38px] flex items-center justify-center bg-[#ffc34d] shadow-[inset_2px_2px_0_#ffe4a0,inset_-2px_-2px_0_#a07820]"><svg class="border border-black" width="29" height="29" viewBox="0 0 29 29"><polygon points="11,6 11,21 15,17 18,24 20,23 17,16 22,16"/></svg></div>
      <div class="h-[38px] flex items-center justify-center bg-[#ffc34d] shadow-[inset_2px_2px_0_#ffe4a0,inset_-2px_-2px_0_#a07820]"><svg class="border border-black" width="29" height="29" viewBox="0 0 29 29"><rect x="5" y="4" width="19" height="20" fill="none" stroke="#e02010" stroke-width="2"/><polygon points="11,6 11,21 15,17 18,24 20,23 17,16 22,16"/></svg></div>
      <div class="h-[38px] flex items-center justify-center bg-[#ffc34d] shadow-[inset_2px_2px_0_#ffe4a0,inset_-2px_-2px_0_#a07820]"><svg class="border border-black" width="29" height="29" viewBox="0 0 29 29"><path d="M9 4H24V24H9L5 20V8Z" fill="none" stroke="#e02010" stroke-width="2"/><polygon points="11,6 11,21 15,17 18,24 20,23 17,16 22,16"/></svg></div>
      <div class="h-[38px] flex items-center justify-center bg-[#ffc34d] shadow-[inset_2px_2px_0_#ffe4a0,inset_-2px_-2px_0_#a07820]"><svg class="border border-black" width="29" height="29" viewBox="0 0 29 29"><path d="M8 5V19M9 25H15V12H22" fill="none" stroke="#000"/><circle cx="8" cy="19" r="2.2" fill="#c02010"/><circle cx="8" cy="25" r="2.2" fill="#22dd44"/><circle cx="24" cy="10" r="2.2" fill="#22dd44"/><polygon points="18,13 18,25 21,22 24,28 26,27 23,21 27,21"/></svg></div>
    </div>

    <div class="flex-1 mt-[3px] ml-[-2px] border-l-2 border-t-2 border-[#4a7f70] relative flex flex-col">
      <div class="h-[77px] shrink-0 relative">
        <svg class="absolute left-[138px] top-[20px]" width="20" height="50" viewBox="0 0 20 50"><defs><radialGradient id="g"><stop offset="0" stop-color="#66dd66"/><stop offset="1" stop-color="#208a30"/></radialGradient></defs><circle cx="24" cy="25" r="23" fill="url(#g)" stroke="#cfe8cf" stroke-width="2"/><text x="5" y="30" font-size="12" font-family="Liberation Sans" font-weight="bold" fill="#e0f0e0">65</text></svg>
      </div>
      <div class="h-[86px] shrink-0 border-y border-[#3a8a20] relative pl-[6px] pt-[4px]">
        <div class="w-[100px] h-[76px] border-2 border-white"></div>
        <div class="absolute left-[52px] top-[77px] w-[3px] h-[3px] bg-[#c02050]"></div>
        <svg class="absolute left-[3px] top-[74px]" width="10" height="10" viewBox="0 0 10 10"><path d="M1 1L9 9M9 1L1 9" stroke="#fff"/></svg>
      </div>
      <div class="flex-1"></div>
      <div class="h-[46px] shrink-0 bg-[#52cdac] border-t-2 border-[#9cd9d9] pl-[3px] pt-[6px] text-[15px] leading-[15px] whitespace-pre">X = 5.344584"<br>Y = 0.357956"</div>
    </div>
  </div>
</div>

<!-- bottom command bar -->
<div class="h-[33px] shrink-0 flex bg-[#ffffd0] ml-[5px] border-b-[3px] border-[#9a9a90] text-[13px] tracking-[-0.8px]">
  <div class="w-[32px] h-full flex items-center justify-center shadow-[inset_2px_2px_0_#fff,inset_-2px_-2px_0_#b0b090]"><svg class="border border-black" width="22" height="22" viewBox="0 0 22 22"><path d="M4 4V9M4 4H9M4 4L18 18M18 18V13M18 18H13" fill="none" stroke="#000"/></svg></div>
  <div class="w-[32px] h-full flex items-center justify-center shadow-[inset_2px_2px_0_#fff,inset_-2px_-2px_0_#b0b090]"><svg class="border border-black" width="22" height="22" viewBox="0 0 22 22"><path d="M3 19H19M3 19L17 4" fill="none" stroke="#000"/><text x="12" y="17" font-size="7">∝</text></svg></div>
  <div class="w-[29px] h-full flex items-center justify-center shadow-[inset_3px_3px_0_#52a090,inset_-3px_-3px_0_#52a090]"><svg class="border border-black rounded-tl-[4px]" width="17" height="17" viewBox="0 0 17 17"><path d="M8 0V17M0 8H17" stroke="#000"/></svg></div>
  <div class="w-[48px] pl-[3px] leading-[30px] whitespace-pre">X Y :</div>
  <div class="w-[174px] h-[28px] mt-[1px] border-2 border-[#b0b090] flex items-start pt-[2px] pl-[3px]"><svg width="5" height="14" viewBox="0 0 5 14"><path d="M0 0H5M0 13H5M2.5 0V13" stroke="#777" stroke-dasharray="1 1"/></svg></div>
  <div class="w-[29px] ml-[3px] h-full flex items-center justify-center shadow-[inset_3px_3px_0_#52a090,inset_-3px_-3px_0_#52a090]"><div class="w-[17px] h-[20px] border border-black text-center leading-[18px] text-[15px]">!</div></div>
  <div class="ml-[4px] leading-[31px] whitespace-pre">&lt;M1&gt; - Select first corner</div>
  <div class="ml-auto w-[77px] h-full bg-[#3f8f7d] flex items-center justify-end pl-[6px] text-[15px] tracking-normal">
    <div class="w-full h-[27px] flex items-center pl-[6px] bg-[#52cdac] shadow-[inset_2px_2px_0_#8fe8cf,inset_-2px_-2px_0_#2f8f78]">Inch<div class="ml-[8px] w-[12px] h-[6px] bg-[#9cd9d9] shadow-[inset_1px_1px_0_#fff,inset_-1px_-1px_0_#3a7a7a]"></div></div>
  </div>
</div>

<!-- status bar -->
<div class="h-[30px] shrink-0 ml-[5px] mt-[1px] bg-[#e0f4f4] pb-[3px]">
  <div class="h-full bg-[#b4ffff] shadow-[inset_2px_2px_0_#e6ffff,inset_-2px_-2px_0_#6a9f9f]"></div>
</div>

<!-- Results viewer window -->
<div class="absolute left-[109px] top-[3px] w-[502px] h-[391px] bg-[#b0b0a8] border-t-2 border-l-2 border-[#e0e0d8] border-r-2 border-r-[#707068] border-b-2 border-b-[#707068] flex flex-col px-[2px] pb-[2px]">
  <div class="h-[19px] shrink-0 flex items-center bg-gradient-to-r from-[#808080] to-[#c0c0c0] pl-[2px] pr-[2px]">
    <svg width="15" height="15" viewBox="0 0 16 16"><rect width="16" height="16" fill="#fff"/><rect width="16" height="4" fill="#1a2a70"/><path d="M4 6 L12 14 M12 6 L4 14" stroke="#c8a000" stroke-width="2"/></svg>
    <span class="ml-[4px] font-['Roboto',sans-serif] text-[#d4d4d4] text-[12.5px]">Results viewer</span>
    <div class="ml-auto w-[15px] h-[15px] bg-[#d4d0c8] flex items-center justify-center border-r border-b border-[#555]"><svg width="10" height="10" viewBox="0 0 10 10"><path d="M1 1L9 9M9 1L1 9" stroke="#000" stroke-width="2"/></svg></div>
  </div>
  <div class="flex-1 flex flex-col bg-black min-h-0">
    <div class="h-[23px] mt-[3px] shrink-0 flex items-center justify-center bg-[#52cdac] shadow-[inset_2px_2px_0_#8fe8cf,inset_-2px_-2px_0_#2f8f78] font-['Liberation_Serif',serif] text-[15px]">Solder Mask Checks</div>
    <div class="flex h-[259px] mt-[5px] shrink-0 gap-[2px]">
      <div class="w-[169px] flex flex-col bg-[#52cdac]">
        <div class="h-[28px] flex bg-[#9cd9d9] gap-[2px] shrink-0 border-b-2 border-black">
          <div class="w-[46px] ml-[2px] pt-[3px] flex items-center justify-center italic font-normal text-[#334] shadow-[inset_2px_2px_0_#c9f2f2,inset_-2px_-2px_0_#5f9c9c] text-[15px] tracking-[-0.4px]">None</div>
          <div class="flex-1 pt-[3px] flex items-center justify-center italic">Layers</div>
          <div class="w-[38px] pt-[3px] flex items-center justify-center italic font-normal text-[#334] shadow-[inset_2px_2px_0_#c9f2f2,inset_-2px_-2px_0_#5f9c9c] text-[15px] tracking-[-0.4px]">All</div>
        </div>
        <div class="flex flex-1 min-h-0 pt-[1px]">
          <div class="w-[149px] h-[173px] ml-[1px] shadow-[inset_-2px_-2px_0_#9cd9d9,inset_1px_1px_0_#2f8f78] pt-[5px] pl-[4px] flex flex-col gap-[3px] font-normal text-[#52cdac] leading-[15px]">
            <div class="w-[139px] h-[15px] bg-black">ts</div>
            <div class="w-[139px] h-[15px] bg-black">bs</div>
          </div>
          <div class="w-[15px] ml-[3px] h-[173px] flex flex-col items-center bg-[#52cdac] shadow-[inset_2px_0_0_#9cd9d9]">
            <svg width="14" height="12" viewBox="0 0 14 12"><polygon points="7,1 13,11 1,11" fill="#9cd9d9" stroke="#2f7f70"/></svg>
            <div class="flex-1 w-[11px] bg-[#52cdac] shadow-[inset_2px_0_0_#8fe8cf,inset_-2px_0_0_#2f8f78]"></div>
            <svg width="14" height="12" viewBox="0 0 14 12"><polygon points="1,1 13,1 7,11" fill="#9cd9d9" stroke="#2f7f70"/></svg>
          </div>
        </div>
        <div class="h-[10px] mb-[4px] mt-[1px] flex items-center w-[150px] bg-[#3fa890] shrink-0">
          <svg width="12" height="10" viewBox="0 0 12 10"><polygon points="1,5 11,0 11,10" fill="#9cd9d9" stroke="#2f7f70"/></svg>
          <div class="flex-1 h-full bg-[#52cdac] shadow-[inset_1px_1px_0_#8fe8cf,inset_-1px_-1px_0_#2f8f78]"></div>
          <svg width="12" height="10" viewBox="0 0 12 10"><polygon points="11,5 1,0 1,10" fill="#9cd9d9" stroke="#2f7f70"/></svg>
        </div>
        <div class="h-[30px] mb-[2px] shrink-0 bg-[#9cd9d9] border-t-2 border-black px-[5px] py-[1px]">
          <div class="h-full flex items-center pl-[6px] shadow-[inset_2px_2px_0_#c9f2f2,inset_-2px_-2px_0_#5f9c9c]">Replace layers<div class="ml-[8px] w-[12px] h-[6px] bg-[#9cd9d9] shadow-[inset_1px_1px_0_#fff,inset_-1px_-1px_0_#3a7a7a]"></div></div>
        </div>
      </div>
      <div class="flex-1 flex flex-col bg-[#52cdac]">
        <div class="h-[30px] flex bg-[#9cd9d9] shrink-0 items-center">
          <div class="w-[205px] h-full pt-[2px] flex items-center justify-center italic shadow-[inset_2px_2px_0_#c9f2f2,inset_-2px_-2px_0_#5f9c9c]">Categories (16)</div>
          <div class="w-[55px] pl-[2px] pt-[2px]">Meas:</div>
          <div class="w-[59px] h-full pt-[2px] flex items-center pl-[5px] shadow-[inset_2px_2px_0_#c9f2f2,inset_-2px_-2px_0_#5f9c9c]">All<div class="ml-[10px] w-[12px] h-[6px] bg-[#9cd9d9] shadow-[inset_1px_1px_0_#fff,inset_-1px_-1px_0_#3a7a7a]"></div></div>
        </div>
        <div class="flex shrink-0 mt-[1px]">
          <div class="w-[303px] h-[113px] pl-[4px] pt-[5px] shadow-[inset_-2px_-2px_0_#9cd9d9,inset_1px_1px_0_#2f8f78] leading-[18px] font-normal">
            <div class="w-[293px] h-[15px] leading-[15px] mb-[2px] bg-black text-[#52cdac]">PTH annular Ring (8)</div>
            <div>NPTH annular Ring (36)</div>
            <div>Via annular Ring (92)</div>
            <div>SMD annular Ring (11199)</div>
            <div>Pad annular Ring (1452)</div>
            <div>Coverage (8444)</div>
          </div>
          <div class="w-[14px] ml-[4px] h-[113px] flex flex-col items-center bg-[#3fa890]">
            <svg width="14" height="12" viewBox="0 0 14 12"><polygon points="7,1 13,11 1,11" fill="#9cd9d9" stroke="#2f7f70"/></svg>
            <div class="h-[31px] w-full mt-[2px] bg-[#52cdac] shadow-[inset_1px_1px_0_#8fe8cf,inset_-1px_-1px_0_#2f8f78]"></div>
            <div class="flex-1"></div>
            <svg width="14" height="12" viewBox="0 0 14 12"><polygon points="1,1 13,1 7,11" fill="#9cd9d9" stroke="#2f7f70"/></svg>
          </div>
        </div>
        <div class="h-[13px] mt-[6px] w-[303px] flex items-center bg-[#3fa890] shrink-0">
          <svg width="13" height="13" viewBox="0 0 13 13"><polygon points="1,6.5 12,1 12,12" fill="#9cd9d9" stroke="#2f7f70"/></svg>
          <div class="w-[219px] h-full bg-[#52cdac] shadow-[inset_1px_1px_0_#8fe8cf,inset_-1px_-1px_0_#2f8f78]"></div>
          <div class="flex-1"></div>
          <svg width="13" height="13" viewBox="0 0 13 13"><polygon points="12,6.5 1,1 1,12" fill="#9cd9d9" stroke="#2f7f70"/></svg>
        </div>
        <div class="h-[23px] mt-[4px] flex items-center shrink-0 gap-[4px]">
          <div class="w-[53px] h-full flex items-center justify-center bg-[#9cd9d9] shadow-[inset_2px_2px_0_#c9f2f2,inset_-2px_-2px_0_#5f9c9c]">First</div>
          <div class="w-[44px] h-full flex items-center justify-center bg-[#9cd9d9] shadow-[inset_2px_2px_0_#c9f2f2,inset_-2px_-2px_0_#5f9c9c] font-normal">&lt;---</div>
          <div class="w-[44px] h-full flex items-center justify-center bg-[#9cd9d9] shadow-[inset_2px_2px_0_#c9f2f2,inset_-2px_-2px_0_#5f9c9c] font-normal">---&gt;</div>
          <div class="w-[44px] h-full flex items-center justify-center bg-[#9cd9d9] shadow-[inset_2px_2px_0_#c9f2f2,inset_-2px_-2px_0_#5f9c9c]">Last</div>
          <div class="w-[58px] pl-[1px] ml-[1px] whitespace-nowrap">Index:</div>
          <div class="w-[58px] h-full ml-[-1px] border border-[#9cd9d9] pl-[2px] flex items-center font-normal"><svg width="5" height="15" viewBox="0 0 5 15"><path d="M0 0.5H5M0 14.5H5M2.5 0V15" stroke="#333" fill="none"/></svg>1</div>
        </div>
        <div class="h-[32px] mt-[3px] flex items-center shrink-0 bg-black">
          <div class="w-[122px] h-full bg-[#9cd9d9] pl-[5px] py-[2px]"><div class="h-full flex items-center pl-[6px] shadow-[inset_2px_2px_0_#c9f2f2,inset_-2px_-2px_0_#5f9c9c]">Auto Zoom<div class="ml-[8px] w-[12px] h-[6px] bg-[#9cd9d9] shadow-[inset_1px_1px_0_#fff,inset_-1px_-1px_0_#3a7a7a]"></div></div></div>
          <div class="w-[28px] h-full ml-[1px] bg-[#9cd9d9] flex items-center">Sv:</div>
          <div class="w-[67px] h-full bg-[#22dd22] pl-[5px] py-[2px] pr-[2px]"><div class="h-full flex items-center justify-end pr-[6px] shadow-[inset_2px_2px_0_#8af08a,inset_-2px_-2px_0_#109010]"><div class="w-[12px] h-[6px] bg-[#9cd9d9] shadow-[inset_1px_1px_0_#fff,inset_-1px_-1px_0_#3a7a7a]"></div></div></div>
          <div class="flex-1 h-full bg-[#52cdac] flex items-center pl-[5px] pb-[8px]"><div class="w-[13px] h-[13px] shadow-[inset_1px_1px_0_#2f8f78,inset_-1px_-1px_0_#8fe8cf]"></div><span class="ml-[3px] whitespace-pre text-[15px] tracking-[-0.3px]">Show All</span></div>
        </div>
        <div class="h-[29px] mt-[2px] flex justify-end pr-[2px] gap-[6px] shrink-0">
          <div class="w-[29px] h-full bg-[#9cd9d9] shadow-[inset_2px_2px_0_#c9f2f2,inset_-2px_-2px_0_#5f9c9c] p-[3px]"><div class="h-full border border-black flex flex-col items-center font-['Liberation_Serif',serif] font-normal text-[11px] leading-[11px]">DEL<div class="w-[7px] h-[7px] rounded-full bg-[#e01010] mt-[1px]"></div></div></div>
          <div class="w-[29px] h-full bg-[#9cd9d9] shadow-[inset_2px_2px_0_#c9f2f2,inset_-2px_-2px_0_#5f9c9c] p-[3px]"><div class="h-full border border-black flex flex-col items-center font-['Liberation_Serif',serif] font-normal text-[11px] leading-[11px]">REF<div class="w-[7px] h-[7px] rounded-full bg-[#10c010] mt-[1px]"></div></div></div>
          <div class="w-[34px] h-full bg-[#9cd9d9] shadow-[inset_2px_2px_0_#c9f2f2,inset_-2px_-2px_0_#5f9c9c] p-[3px]"><div class="h-full border border-black flex flex-col items-center font-['Liberation_Serif',serif] font-normal text-[10px] leading-[10px]">UNDO<svg width="10" height="9" viewBox="0 0 10 9"><path d="M2 2H6A3 3 0 0 1 6 8H3" fill="none" stroke="#c0a000" stroke-width="1.5"/></svg></div></div>
        </div>
      </div>
    </div>
    <div class="h-[19px] mt-[2px] shrink-0 bg-[#52cdac] flex items-center justify-center font-normal whitespace-pre">ts 3.244mil  r102.362</div>
    <div class="h-[19px] mt-[2px] shrink-0 bg-[#ffffd0] pl-[2px] leading-[19px] font-normal whitespace-pre">ERF--&gt; ar_pth = 7 9 10</div>
    <div class="flex-1 mt-[2px] flex bg-[#9cd9d9] items-center">
      <div class="w-[288px] h-[29px] flex items-center justify-center shadow-[inset_2px_2px_0_#c9f2f2,inset_-2px_-2px_0_#5f9c9c]">Close</div>
      <div class="flex-1 flex justify-end pr-[1px] gap-[5px]">
        <div class="w-[29px] h-[29px] shadow-[inset_2px_2px_0_#c9f2f2,inset_-2px_-2px_0_#5f9c9c] flex items-center justify-center"><svg class="border border-black" width="23" height="23" viewBox="0 0 23 23"><rect x="11" width="12" height="23" fill="#ffff30"/><path d="M0 23V17H6V7H9V4H12V17H23V23Z"/><circle cx="15" cy="6" r="1.5"/></svg></div>
        <div class="w-[29px] h-[29px] shadow-[inset_2px_2px_0_#c9f2f2,inset_-2px_-2px_0_#5f9c9c] flex items-center justify-center"><svg class="border border-black" width="23" height="23" viewBox="0 0 23 23"><rect x="3" y="2" width="17" height="15" fill="#111"/><circle cx="9" cy="10" r="3.5" fill="#e01010"/><path d="M9 10H15M15 3V16" stroke="#e01010" stroke-width="1.5"/><path d="M3 19H20" stroke="#000"/></svg></div>
        <div class="w-[29px] h-[29px] shadow-[inset_2px_2px_0_#c9f2f2,inset_-2px_-2px_0_#5f9c9c] flex items-center justify-center"><svg class="border border-black" width="23" height="23" viewBox="0 0 23 23"><text x="11.5" y="16" text-anchor="middle" font-size="11" font-family="Liberation Serif">REF</text><path d="M3 3L20 20M20 3L3 20" stroke="#e02020" stroke-width="2"/></svg></div>
        <div class="w-[29px] h-[29px] shadow-[inset_2px_2px_0_#c9f2f2,inset_-2px_-2px_0_#5f9c9c] flex items-center justify-center"><svg class="border border-black" width="23" height="23" viewBox="0 0 23 23"><path d="M3 2H20V21H3Z" fill="#22dd22" stroke="#000"/><text x="7" y="13" font-size="12" font-family="Liberation Sans" font-weight="bold">1</text><text x="12" y="17" font-size="9" font-family="Liberation Sans" font-weight="bold">2</text></svg></div>
        <div class="w-[29px] h-[29px] shadow-[inset_2px_2px_0_#c9f2f2,inset_-2px_-2px_0_#5f9c9c] flex items-center justify-center"><svg class="border border-black" width="23" height="23" viewBox="0 0 23 23"><path d="M4 2H19V17L15 21H4Z" fill="#ffff30" stroke="#000"/><path d="M7 6H16M7 9H16M7 12H16M7 15H13" stroke="#000"/></svg></div>
        <div class="w-[29px] h-[29px] shadow-[inset_2px_2px_0_#c9f2f2,inset_-2px_-2px_0_#5f9c9c] flex items-center justify-center"><svg class="border border-black" width="23" height="23" viewBox="0 0 23 23"><rect x="3" y="11" width="3" height="8" fill="#b02020"/><rect x="7" y="6" width="3" height="13" fill="#10a020"/><rect x="11" y="2" width="3" height="17" fill="#d010c0"/><rect x="15" y="8" width="3" height="11" fill="#1020d0"/><rect x="19" y="5" width="2" height="14" fill="#20c0d0"/><path d="M2 20H22" stroke="#000"/></svg></div>
      </div>
    </div>
  </div>
</div>

<!-- Results histogram window -->
<div class="absolute left-[874px] top-[108px] w-[474px] h-[566px] bg-[#b0b0a8] border-2 border-[#e0e0d8] border-r-[#707068] border-b-[#707068] flex flex-col px-[2px] pb-[2px]">
  <div class="h-[22px] shrink-0 flex items-center pt-[2px] bg-gradient-to-r from-[#808080] to-[#c0c0c0] pl-[3px] pr-[3px]">
    <svg width="15" height="15" viewBox="0 0 16 16"><rect width="16" height="16" fill="#fff"/><rect width="16" height="4" fill="#1a2a70"/><path d="M4 6 L12 14 M12 6 L4 14" stroke="#c8a000" stroke-width="2"/></svg>
    <span class="ml-[4px] font-['Roboto',sans-serif] text-[#d4d4d4] text-[12.5px]">Results histogram</span>
    <div class="ml-auto w-[15px] h-[15px] bg-[#d4d0c8] flex items-center justify-center border-r border-b border-[#555]"><svg width="10" height="10" viewBox="0 0 10 10"><path d="M1 1L9 9M9 1L1 9" stroke="#000" stroke-width="2"/></svg></div>
  </div>
  <div class="flex-1 flex flex-col bg-[#52cdac] min-h-0 border-t border-[#2f7f70]">
    <div class="h-[292px] shrink-0 flex pl-[5px] pr-[6px] pt-[3px] gap-[2px]">
      <div class="w-[102px] h-[288px] border border-black bg-[#9cd9d9] flex flex-col shrink-0">
        <div class="h-[137px] border-b-2 border-black shrink-0 flex flex-col pt-[7px] pl-[5px] gap-[9px]">
          <div class="flex items-center h-[18px]"><div class="w-[11px] h-[11px] rotate-45 bg-[#9cd9d9] shadow-[inset_2px_2px_0_#5f9c9c,inset_-2px_-2px_0_#c9f2f2]"></div><span class="ml-[8px]">Count</span></div>
          <div class="flex items-center h-[18px]"><div class="w-[11px] h-[11px] rotate-45 bg-[#9cd9d9] shadow-[inset_2px_2px_0_#5f9c9c,inset_-2px_-2px_0_#c9f2f2]"></div><span class="ml-[8px]">Average</span></div>
          <div class="flex items-center h-[18px]"><div class="w-[11px] h-[11px] rotate-45 bg-[#9cd9d9] shadow-[inset_2px_2px_0_#5f9c9c,inset_-2px_-2px_0_#c9f2f2]"></div><span class="ml-[8px]">Sum</span></div>
          <div class="flex items-center h-[18px]"><div class="w-[11px] h-[11px] rotate-45 bg-[#c01050] shadow-[inset_2px_2px_0_#5f9c9c,inset_-2px_-2px_0_#c9f2f2]"></div><span class="ml-[8px]">Min</span></div>
          <div class="flex items-center h-[18px]"><div class="w-[11px] h-[11px] rotate-45 bg-[#9cd9d9] shadow-[inset_2px_2px_0_#5f9c9c,inset_-2px_-2px_0_#c9f2f2]"></div><span class="ml-[8px]">Max</span></div>
        </div>
        <div class="flex h-[117px] shrink-0">
          <div class="w-[82px] h-full pl-[4px] pt-[6px] shadow-[inset_-2px_0_0_#c9f2f2,inset_2px_0_0_#c9f2f2] font-normal"><div class="w-[72px] h-[15px] leading-[15px] bg-black text-[#9cd9d9]">Spacing</div></div>
          <div class="w-[14px] ml-[3px] h-full flex flex-col items-center">
            <svg width="14" height="12" viewBox="0 0 14 12"><polygon points="7,1 13,11 1,11" fill="#9cd9d9" stroke="#5f9c9c"/></svg>
            <div class="flex-1 w-[9px] shadow-[inset_1px_1px_0_#c9f2f2,inset_-1px_-1px_0_#5f9c9c]"></div>
            <svg width="14" height="12" viewBox="0 0 14 12"><polygon points="1,1 13,1 7,11" fill="#9cd9d9" stroke="#5f9c9c"/></svg>
          </div>
        </div>
        <div class="flex gap-[4px] pl-[1px] flex-1">
          <div class="w-[30px] h-[30px] bg-[#9cd9d9] shadow-[inset_2px_2px_0_#c9f2f2,inset_-2px_-2px_0_#5f9c9c] p-[3px]"><div class="h-full border border-black flex flex-col items-center font-['Liberation_Serif',serif] font-normal text-[11px] leading-[11px]">DEL<div class="w-[7px] h-[7px] rounded-full bg-[#e01010] mt-[1px]"></div></div></div>
          <div class="w-[30px] h-[30px] bg-[#9cd9d9] shadow-[inset_2px_2px_0_#c9f2f2,inset_-2px_-2px_0_#5f9c9c] p-[3px]"><div class="h-full border border-black flex flex-col items-center font-['Liberation_Serif',serif] font-normal text-[11px] leading-[11px]">REF<div class="w-[7px] h-[7px] rounded-full bg-[#10c010] mt-[1px]"></div></div></div>
        </div>
      </div>
      <div class="w-[352px] h-[288px] border border-black bg-[#9cd9d9] flex flex-col shrink-0 border-b-0 relative font-normal">
        <div class="absolute left-[46px] top-[5px] w-[260px] h-[21px] bg-[#b4ffff] border border-black shadow-[3px_3px_0_#7a9f9f] italic text-[15px] leading-[24px] text-center font-bold whitespace-pre">Size(Spacing) / Min(Spacing)</div>
        <div class="h-[166px] shrink-0 flex items-end pl-[5px]">
          <div class="w-[55px] flex flex-col"><div class="h-[15px] text-center leading-[15px]">3.05</div><div class="h-[115px] bg-[#ff1a1a] border border-black border-r-0"></div></div>
          <div class="w-[55px] flex flex-col"><div class="h-[15px] text-center leading-[15px]">3.244</div><div class="h-[123px] bg-[#ff1a1a] border border-black"></div></div>
        </div>
        <div class="h-[4px] shrink-0 bg-black"></div>
        <div class="flex pl-[5px] pt-[1px] h-[37px] shrink-0">
          <div class="w-[55px] h-[29px] bg-[#ff1a1a] border border-black border-r-0 pl-[8px] pt-[3px] leading-[15px] whitespace-pre">3-<br>  3.1</div>
          <div class="w-[55px] h-[29px] bg-[#ff1a1a] border border-black pl-[8px] pt-[3px] leading-[15px] whitespace-pre">3.2-<br>  3.3</div>
        </div>
        <div class="h-[14px] shrink-0 flex items-center bg-[#7fb8b8]">
          <svg width="13" height="13" viewBox="0 0 13 13"><polygon points="1,6.5 12,1 12,12" fill="#9cd9d9" stroke="#5f9c9c"/></svg>
          <div class="flex-1 h-full bg-[#9cd9d9] shadow-[inset_1px_1px_0_#c9f2f2,inset_-1px_-1px_0_#5f9c9c]"></div>
          <svg width="13" height="13" viewBox="0 0 13 13"><polygon points="12,6.5 1,1 1,12" fill="#9cd9d9" stroke="#5f9c9c"/></svg>
        </div>
        <div class="flex-1 border-2 border-black flex min-h-0">
          <div class="w-[76px] pl-[3px] pt-[5px] shadow-[inset_2px_0_0_#c9f2f2] font-bold leading-[15px]"><div class="w-[64px] h-[15px] bg-black text-[#9cd9d9] overflow-hidden font-normal">Spacing</div><div class="mt-[2px]">PTH</div></div>
          <div class="w-[14px] flex flex-col items-center bg-[#7fb8b8]">
            <svg width="14" height="12" viewBox="0 0 14 12"><polygon points="7,1 13,11 1,11" fill="#9cd9d9" stroke="#5f9c9c"/></svg>
            <div class="flex-1 w-[11px] bg-[#9cd9d9]"></div>
            <svg width="14" height="12" viewBox="0 0 14 12"><polygon points="1,1 13,1 7,11" fill="#9cd9d9" stroke="#5f9c9c"/></svg>
          </div>
          <div class="flex-1 flex flex-col px-[3px]">
            <div class="text-center leading-[22px]">Resolution</div>
            <div class="pl-[3px] leading-[21px]">0.1</div>
            <div class="h-[14px] bg-[#7fb8b8] flex shadow-[inset_1px_1px_0_#5f9c9c,inset_-1px_-1px_0_#c9f2f2] p-[1px]"><div class="w-[14px] bg-[#9cd9d9] border border-[#5f9c9c]"></div><div class="w-[14px] bg-[#9cd9d9] border border-[#5f9c9c]"></div></div>
          </div>
        </div>
      </div>
    </div>
    <div class="h-[7px] shrink-0 relative border-y border-[#2f7f70] mt-[1px] bg-[#7fd8c0]"><div class="absolute left-[448px] top-[-3px] w-[9px] h-[9px] bg-[#52cdac] border border-[#2f7f70]"></div></div>
    <div class="h-[161px] shrink-0 mx-[5px] mt-[2px] border border-[#1f5f50] bg-[#52cdac] flex items-center justify-center">
      <div class="w-[160px] h-[123px] mb-[1px] border-2 border-black bg-[#9cd9d9] flex items-end justify-center gap-[2px] pb-[3px] pr-[22px] relative">
        <div class="w-[4px] h-[3px] bg-[#d020e0]"></div><div class="w-[1px]"></div><div class="w-[4px] h-[3px] bg-[#d020e0]"></div><div class="w-[4px] h-[3px] bg-[#d020e0]"></div><div class="w-[1px]"></div><div class="w-[4px] h-[3px] bg-[#d020e0]"></div>
        <div class="absolute left-[69px] bottom-0 w-[5px] h-[1px] bg-black"></div>
      </div>
    </div>
    <div class="h-[41px] shrink-0 flex mx-[6px] mt-[4px] items-center">
      <div class="w-[30px] h-[38px] bg-[#9cd9d9] shadow-[inset_2px_2px_0_#c9f2f2,inset_-2px_-2px_0_#5f9c9c] p-[4px] flex items-center"><div class="w-full h-[22px] border border-black flex flex-col items-center font-['Liberation_Serif',serif] font-normal text-[11px] leading-[11px]">DEL<div class="w-[7px] h-[7px] rounded-full bg-[#e01010] mt-[1px]"></div></div></div>
      <div class="w-[30px] h-[38px] ml-[4px] bg-[#9cd9d9] shadow-[inset_2px_2px_0_#c9f2f2,inset_-2px_-2px_0_#5f9c9c] p-[4px] flex items-center"><div class="w-full h-[22px] border border-black flex flex-col items-center font-['Liberation_Serif',serif] font-normal text-[11px] leading-[11px]">REF<div class="w-[7px] h-[7px] rounded-full bg-[#10c010] mt-[1px]"></div></div></div>
      <div class="w-[308px] ml-[1px] h-[41px] border border-black bg-[#9cd9d9] flex items-center pl-[2px] text-[15px] whitespace-pre">8 measurements for 2 layers</div>
      <div class="w-[37px] h-[38px] ml-[4px] bg-[#9cd9d9] shadow-[inset_2px_2px_0_#c9f2f2,inset_-2px_-2px_0_#5f9c9c] flex items-center justify-center"><svg class="border border-black" width="30" height="30" viewBox="0 0 30 30"><rect x="3" y="3" width="13" height="13" fill="#9cd9d9" stroke="#1020d0" stroke-width="2"/><path d="M5 14V8H8V11H11V8H14V14Z" fill="#e01010"/><rect x="19" y="19" width="8" height="8" fill="none" stroke="#1020d0" stroke-width="2"/><path d="M17 6H24V15" fill="none" stroke="#000"/><polygon points="21,14 27,14 24,18"/></svg></div>
      <div class="w-[37px] h-[38px] ml-[5px] bg-[#9cd9d9] shadow-[inset_2px_2px_0_#c9f2f2,inset_-2px_-2px_0_#5f9c9c] flex items-center justify-center"><svg class="border border-black" width="30" height="30" viewBox="0 0 30 30"><rect x="3" y="3" width="13" height="13" fill="#9cd9d9" stroke="#1020d0" stroke-width="2"/><path d="M5 14V8H8V11H11V8H14V14Z" fill="#e01010"/><rect x="19" y="19" width="8" height="8" fill="none" stroke="#1020d0" stroke-width="2"/><path d="M18 25H6V18" fill="none" stroke="#000"/><polygon points="3,20 9,20 6,16"/></svg></div>
    </div>
    <div class="h-[3px] shrink-0"></div>
    <div class="flex-1 bg-[#c8d8d8] px-[2px] pt-[3px] border-t border-black">
      <div class="h-[23px] flex items-center justify-center bg-[#9cd9d9] shadow-[inset_2px_2px_0_#c9f2f2,inset_-2px_-2px_0_#5f9c9c]">Close</div>
    </div>
  </div>
</div>

</div>
</body>
</html>
